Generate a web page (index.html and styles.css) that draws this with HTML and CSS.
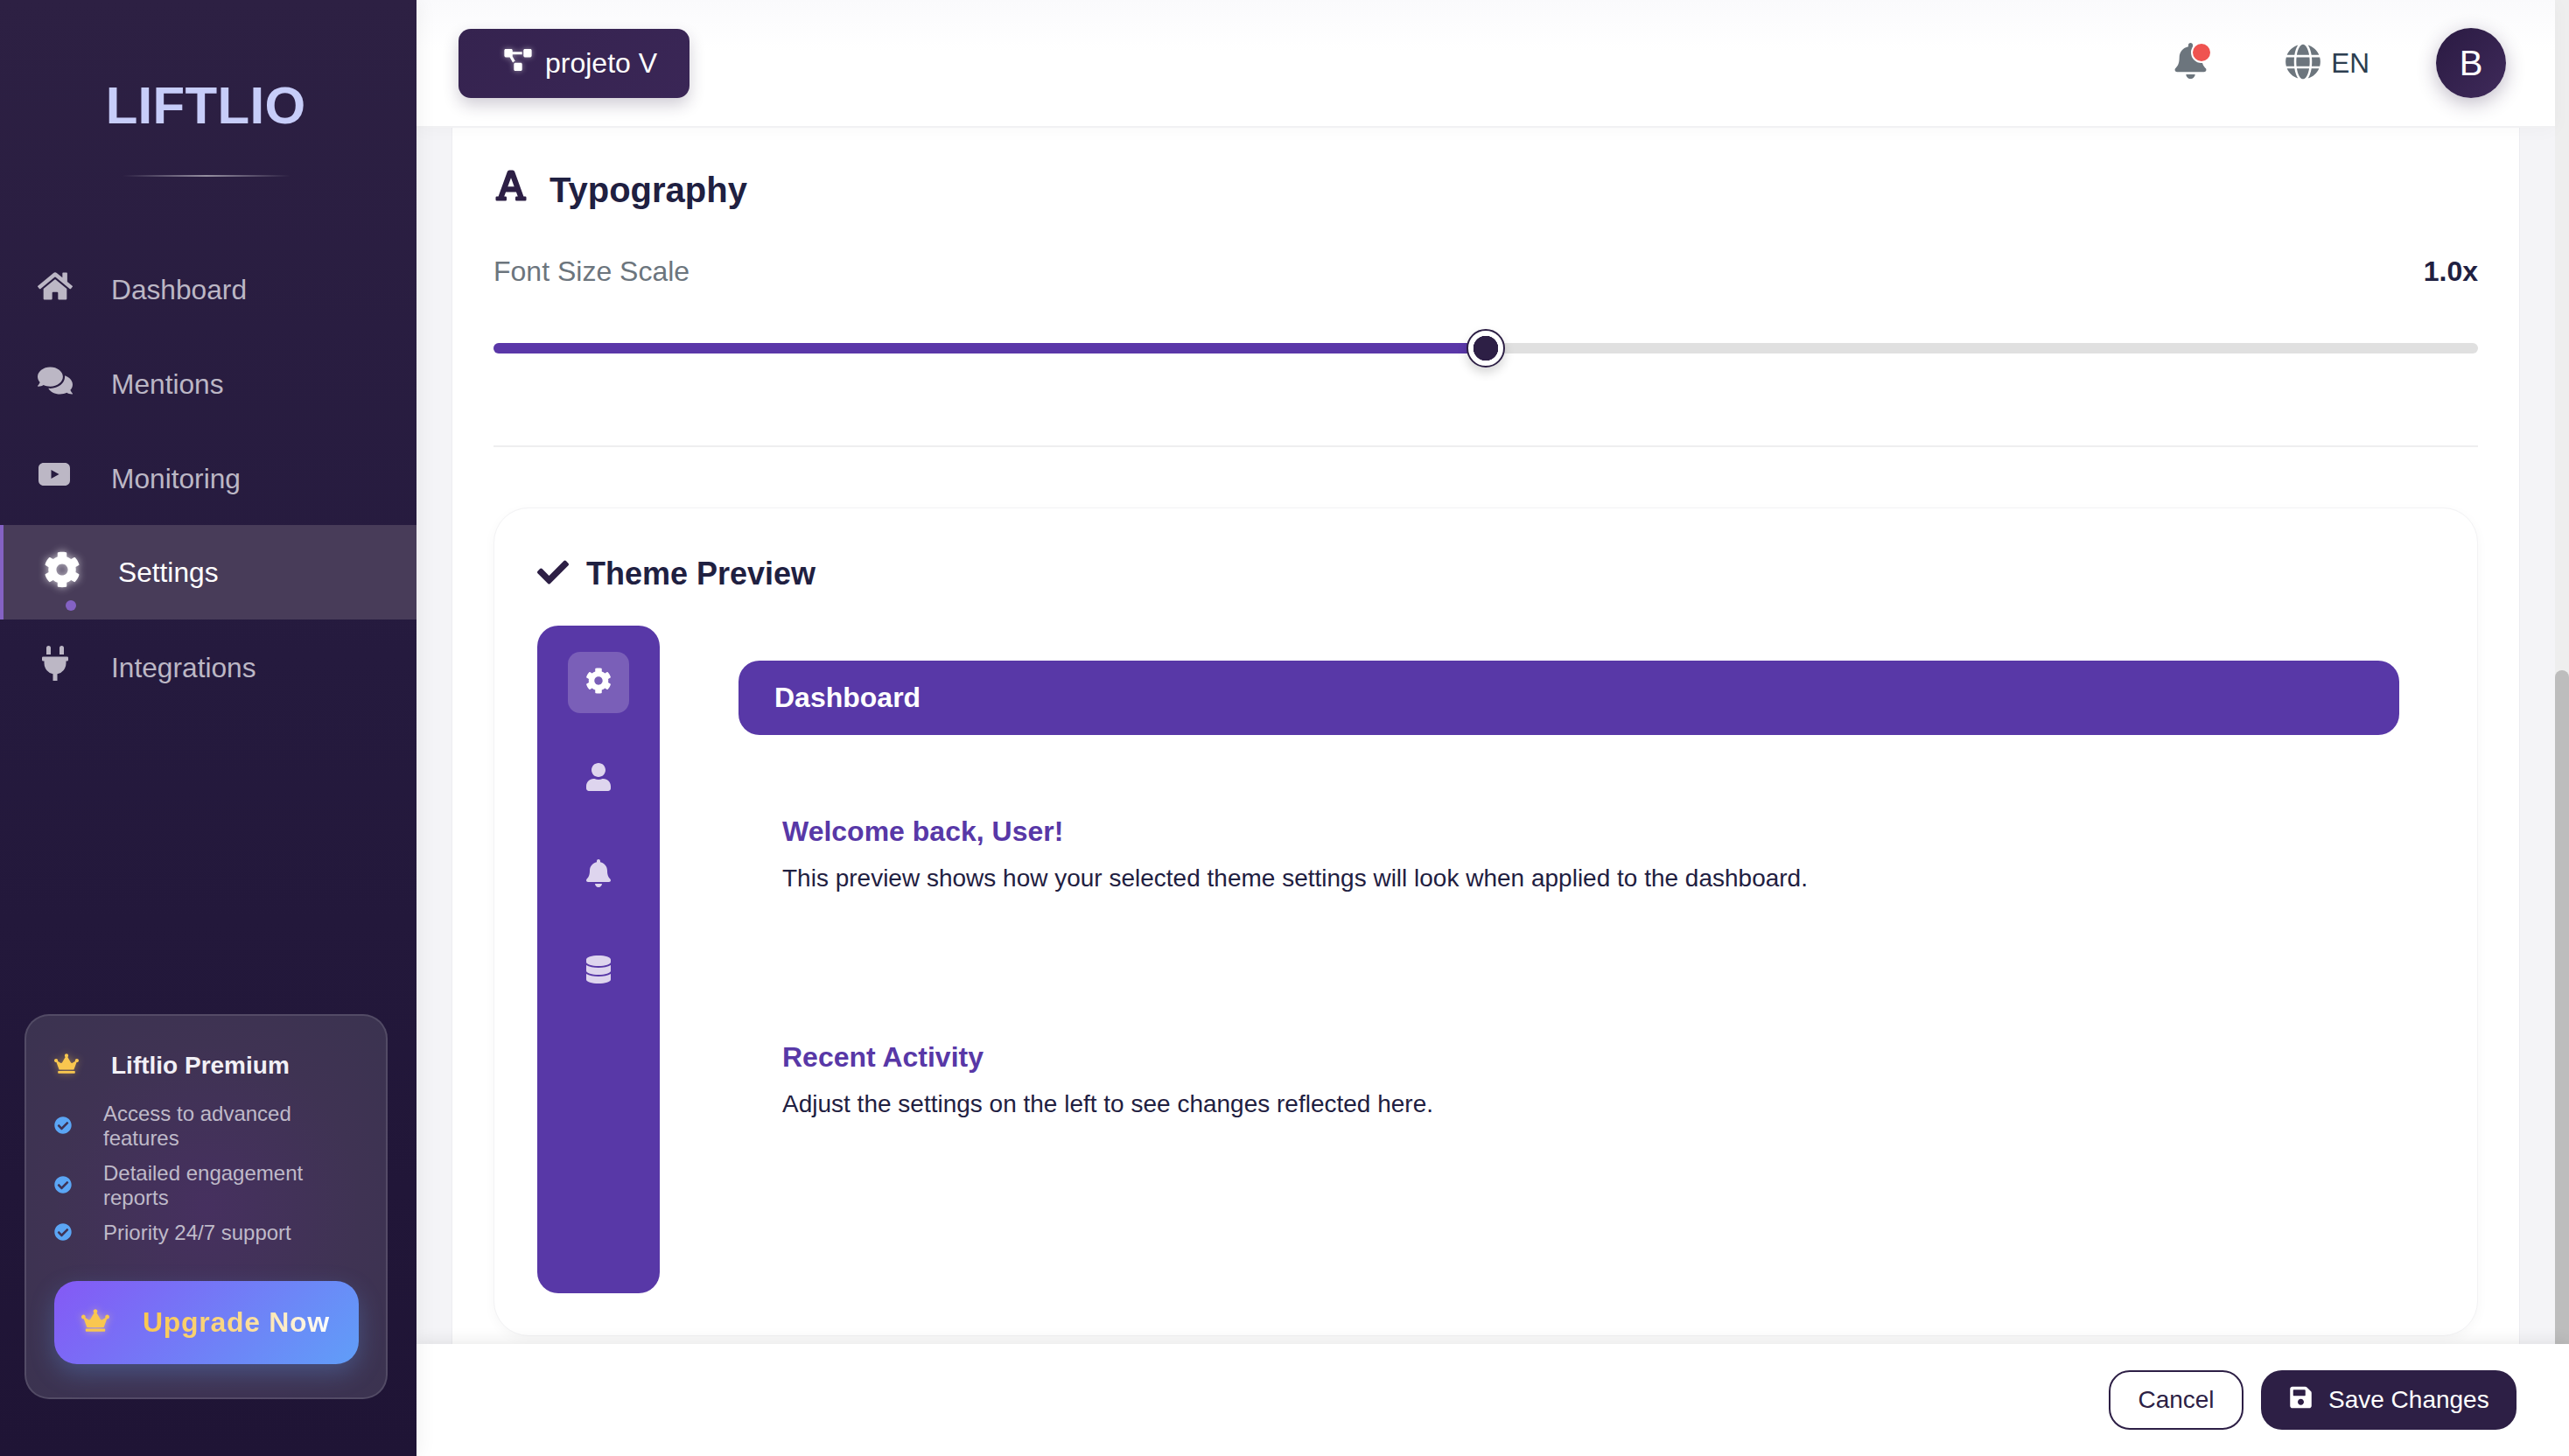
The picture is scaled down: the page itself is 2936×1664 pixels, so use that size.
FILE: index.html
```html
<!DOCTYPE html>
<html lang="en">
<head>
    <meta charset="UTF-8">
    <title>Liftlio - Settings</title>
    <link rel="stylesheet" href="styles.css">
</head>
<body>
    <svg class="icon-defs" xmlns="http://www.w3.org/2000/svg">
        <symbol id="i-home" viewBox="0 0 576 512"><path d="M280.37 148.26L96 300.11V464a16 16 0 0 0 16 16l112.06-.29a16 16 0 0 0 15.92-16V368a16 16 0 0 1 16-16h64a16 16 0 0 1 16 16v95.64a16 16 0 0 0 16 16.05L464 480a16 16 0 0 0 16-16V300L295.67 148.26a12.19 12.19 0 0 0-15.3 0zM571.6 251.47L488 182.56V44.05a12 12 0 0 0-12-12h-56a12 12 0 0 0-12 12v72.61L318.47 43a48 48 0 0 0-61 0L4.34 251.47a12 12 0 0 0-1.6 16.9l25.5 31A12 12 0 0 0 45.15 301l235.22-193.74a12.19 12.19 0 0 1 15.3 0L530.9 301a12 12 0 0 0 16.9-1.6l25.5-31a12 12 0 0 0-1.7-16.93z"/></symbol>
        <symbol id="i-comments" viewBox="0 0 576 512"><path d="M416 192c0-88.4-93.1-160-208-160S0 103.6 0 192c0 34.3 14.1 65.9 38 92-13.4 30.2-35.5 54.2-35.8 54.5-2.2 2.3-2.8 5.7-1.5 8.7S4.8 352 8 352c36.6 0 66.9-12.3 88.7-25 32.2 15.7 70.3 25 111.3 25 114.9 0 208-71.6 208-160zm122 220c23.9-26 38-57.7 38-92 0-66.9-53.5-124.2-129.3-148.1.9 6.6 1.3 13.3 1.3 20.1 0 105.9-107.7 192-240 192-10.8 0-21.3-.8-31.7-1.9C207.8 439.6 281.8 480 368 480c41 0 79.1-9.2 111.3-25 21.8 12.7 52.1 25 88.7 25 3.2 0 6.1-1.9 7.3-4.8 1.3-2.9.7-6.3-1.5-8.7-.3-.3-22.4-24.2-35.8-54.5z"/></symbol>
        <symbol id="i-youtube" viewBox="0 0 36 26"><path fill-rule="evenodd" d="M6 0h24c3.6 0 6 2.4 6 6v14c0 3.6-2.4 6-6 6H6c-3.600 0-6-2.400-6-6V6c0-3.600 2.400-6 6-6zM14.500 8v10l9-5z"/></symbol>
        <symbol id="i-cog" viewBox="0 0 512 512"><path d="M487.4 315.7l-42.6-24.6c4.3-23.2 4.3-47 0-70.2l42.6-24.6c4.9-2.8 7.1-8.6 5.500-14-11.100-35.600-30-67.800-54.700-94.600-3.800-4.100-10-5.100-14.800-2.300L380.800 110c-17.900-15.400-38.500-27.300-60.800-35.100V25.800c0-5.600-3.900-10.500-9.400-11.700-36.700-8.200-74.300-7.800-109.200 0-5.500 1.200-9.400 6.100-9.400 11.700V75c-22.200 7.900-42.800 19.800-60.800 35.100L88.700 85.500c-4.900-2.800-11-1.900-14.800 2.300-24.700 26.700-43.600 58.900-54.700 94.600-1.700 5.400.6 11.200 5.500 14L67.300 221c-4.300 23.200-4.300 47 0 70.200l-42.600 24.600c-4.900 2.800-7.100 8.600-5.500 14 11.100 35.600 30 67.800 54.700 94.600 3.800 4.100 10 5.100 14.800 2.300l42.600-24.600c17.900 15.400 38.500 27.300 60.800 35.100v49.200c0 5.600 3.900 10.500 9.400 11.700 36.700 8.200 74.300 7.800 109.200 0 5.500-1.200 9.400-6.100 9.400-11.700v-49.200c22.200-7.900 42.800-19.800 60.800-35.100l42.600 24.600c4.900 2.800 11 1.900 14.800-2.300 24.700-26.700 43.600-58.900 54.700-94.600 1.500-5.500-.7-11.300-5.600-14.100zM256 336c-44.100 0-80-35.900-80-80s35.900-80 80-80 80 35.900 80 80-35.900 80-80 80z"/></symbol>
        <symbol id="i-plug" viewBox="0 0 384 512"><path d="M320,32a32,32,0,0,0-64,0v96h64Zm48,128H16A16,16,0,0,0,0,176v32a16,16,0,0,0,16,16H32v32A160.07,160.07,0,0,0,160,412.8V512h64V412.8A160.07,160.07,0,0,0,352,256V224h16a16,16,0,0,0,16-16V176A16,16,0,0,0,368,160ZM128,32a32,32,0,0,0-64,0v96h64Z"/></symbol>
        <symbol id="i-crown" viewBox="0 0 640 512"><path d="M528 448H112c-8.800 0-16 7.200-16 16v32c0 8.800 7.200 16 16 16h416c8.800 0 16-7.200 16-16v-32c0-8.800-7.200-16-16-16zm64-320c-26.500 0-48 21.500-48 48 0 7.100 1.600 13.700 4.400 19.800L476 239.200c-15.400 9.200-35.300 4-44.200-11.600L350.300 85C361 76.200 368 63 368 48c0-26.500-21.500-48-48-48s-48 21.500-48 48c0 15 7 28.200 17.700 37l-81.500 142.600c-8.900 15.600-28.900 20.800-44.200 11.600l-72.300-43.400c2.700-6 4.400-12.700 4.400-19.800 0-26.500-21.500-48-48-48S0 149.500 0 176s21.500 48 48 48c2.600 0 5.200-.4 7.700-.8L128 416h384l72.300-192.800c2.500.4 5.100.8 7.700.8 26.500 0 48-21.500 48-48s-21.500-48-48-48z"/></symbol>
        <symbol id="i-check-circle" viewBox="0 0 512 512"><path d="M504 256c0 136.967-111.033 248-248 248S8 392.967 8 256 119.033 8 256 8s248 111.033 248 248zM227.314 387.314l184-184c6.248-6.248 6.248-16.379 0-22.627l-22.627-22.627c-6.248-6.249-16.379-6.249-22.628 0L216 308.118l-70.059-70.059c-6.248-6.248-16.379-6.248-22.628 0l-22.627 22.627c-6.248 6.248-6.248 16.379 0 22.627l104 104c6.249 6.249 16.379 6.249 22.628.001z"/></symbol>
        <symbol id="i-check" viewBox="0 0 512 512"><path d="M173.898 439.404l-166.400-166.400c-9.997-9.997-9.997-26.206 0-36.204l36.203-36.204c9.997-9.998 26.207-9.998 36.204 0L192 312.690 432.095 72.596c9.997-9.997 26.207-9.997 36.204 0l36.203 36.204c9.997 9.997 9.997 26.206 0 36.204l-294.400 294.401c-9.998 9.997-26.207 9.997-36.204-.001z"/></symbol>
        <symbol id="i-bell" viewBox="0 0 448 512"><path d="M224 512c35.320 0 63.970-28.650 63.970-64H160.030c0 35.350 28.650 64 63.970 64zm215.390-149.710c-19.320-20.760-55.470-51.990-55.470-154.290 0-77.700-54.480-139.900-127.940-155.160V32c0-17.670-14.320-32-31.980-32s-31.980 14.330-31.980 32v20.840C118.560 68.100 64.080 130.300 64.080 208c0 102.300-36.150 133.530-55.470 154.290-6 6.450-8.660 14.160-8.610 21.710.11 16.400 12.980 32 32.100 32h383.800c19.120 0 32-15.600 32.100-32 .05-7.550-2.610-15.270-8.610-21.710z"/></symbol>
        <symbol id="i-user" viewBox="0 0 448 512"><path d="M224 256c70.700 0 128-57.300 128-128S294.700 0 224 0 96 57.300 96 128s57.300 128 128 128zm89.600 32h-16.700c-22.200 10.200-46.900 16-72.900 16s-50.600-5.800-72.900-16h-16.700C60.200 288 0 348.200 0 422.400V464c0 26.500 21.500 48 48 48h352c26.500 0 48-21.500 48-48v-41.600c0-74.200-60.200-134.400-134.400-134.400z"/></symbol>
        <symbol id="i-database" viewBox="0 0 448 512"><path d="M448 73.143v45.714C448 159.143 347.667 192 224 192S0 159.143 0 118.857V73.143C0 32.857 100.333 0 224 0s224 32.857 224 73.143zM448 176v102.857C448 319.143 347.667 352 224 352S0 319.143 0 278.857V176c48.125 33.143 136.208 48.572 224 48.572S399.874 209.143 448 176zm0 160v102.857C448 479.143 347.667 512 224 512S0 479.143 0 438.857V336c48.125 33.143 136.208 48.572 224 48.572S399.874 369.143 448 336z"/></symbol>
        <symbol id="i-font" viewBox="0 0 448 512"><path d="M432 416h-23.410L277.880 53.690A32 32 0 0 0 247.580 32h-47.160a32 32 0 0 0-30.300 21.690L39.410 416H16a16 16 0 0 0-16 16v32a16 16 0 0 0 16 16h128a16 16 0 0 0 16-16v-32a16 16 0 0 0-16-16h-19.600l23.300-64h152.600l23.300 64H304a16 16 0 0 0-16 16v32a16 16 0 0 0 16 16h128a16 16 0 0 0 16-16v-32a16 16 0 0 0-16-16zM176.850 272L224 142.510 271.150 272z"/></symbol>
        <symbol id="i-project" viewBox="0 0 640 512"><path d="M384 320H256c-17.670 0-32 14.330-32 32v128c0 17.670 14.330 32 32 32h128c17.670 0 32-14.330 32-32V352c0-17.670-14.330-32-32-32zM192 32c0-17.670-14.330-32-32-32H32C14.330 0 0 14.330 0 32v128c0 17.670 14.330 32 32 32h95.720l73.160 128.040C211.980 300.980 232.400 288 256 288h.28L192 175.510V128h224V64H192V32zM608 0H480c-17.670 0-32 14.330-32 32v128c0 17.670 14.330 32 32 32h128c17.670 0 32-14.330 32-32V32c0-17.670-14.330-32-32-32z"/></symbol>
        <symbol id="i-globe" viewBox="0 0 496 512"><path d="M336.500 160C322 70.700 287.800 8 248 8s-74 62.700-88.500 152h177zM152 256c0 22.200 1.200 43.500 3.300 64h185.300c2.100-20.500 3.300-41.800 3.300-64s-1.200-43.500-3.300-64H155.300c-2.100 20.500-3.300 41.800-3.300 64zm324.700-96c-28.600-67.900-86.500-120.400-158-141.600 24.400 33.800 41.200 84.700 50 141.600h108zM177.200 18.400C105.800 39.600 47.800 92.100 19.300 160h108c8.700-56.900 25.500-107.800 49.900-141.600zM487.400 192H372.700c2.100 21 3.300 42.500 3.300 64s-1.200 43-3.300 64h114.600c5.500-20.500 8.600-41.800 8.600-64s-3.100-43.500-8.500-64zM120 256c0-21.500 1.200-43 3.300-64H8.600C3.200 212.500 0 233.800 0 256s3.200 43.500 8.600 64h114.600c-2-21-3.200-42.500-3.200-64zm39.500 96c14.500 89.300 48.700 152 88.500 152s74-62.700 88.500-152h-177zm159.300 141.600c71.400-21.200 129.400-73.700 158-141.600h-108c-8.800 56.900-25.600 107.800-50 141.600zM19.300 352c28.600 67.900 86.500 120.400 158 141.600-24.400-33.800-41.200-84.700-50-141.600h-108z"/></symbol>
        <symbol id="i-save" viewBox="0 0 448 512"><path d="M433.941 129.941l-83.882-83.882A48 48 0 0 0 316.118 32H48C21.490 32 0 53.490 0 80v352c0 26.510 21.490 48 48 48h352c26.510 0 48-21.490 48-48V163.882a48 48 0 0 0-14.059-33.941zM224 416c-35.346 0-64-28.654-64-64 0-35.346 28.654-64 64-64s64 28.654 64 64c0 35.346-28.654 64-64 64zm96-304.520V212c0 6.627-5.373 12-12 12H76c-6.627 0-12-5.373-12-12V108c0-6.627 5.373-12 12-12h228.520c3.183 0 6.235 1.264 8.485 3.515l3.480 3.480A11.996 11.996 0 0 1 320 111.480z"/></symbol>
    </svg>

    <div class="app">
        <aside class="sidebar">
            <div class="logo">LIFTLIO</div>
            <div class="logo-line"></div>

            <nav class="nav">
                <a class="nav-item"><svg class="nav-icon icon-home"><use href="#i-home"/></svg><span>Dashboard</span></a>
                <a class="nav-item"><svg class="nav-icon icon-comments"><use href="#i-comments"/></svg><span>Mentions</span></a>
                <a class="nav-item"><svg class="nav-icon icon-youtube"><use href="#i-youtube"/></svg><span>Monitoring</span></a>
                <a class="nav-item active"><svg class="nav-icon icon-cog"><use href="#i-cog"/></svg><span>Settings</span></a>
                <a class="nav-item"><svg class="nav-icon icon-plug"><use href="#i-plug"/></svg><span>Integrations</span></a>
            </nav>

            <div class="premium">
                <div class="premium-title">
                    <svg class="premium-crown"><use href="#i-crown"/></svg>
                    <span>Liftlio Premium</span>
                </div>
                <ul class="premium-list">
                    <li><svg class="premium-check"><use href="#i-check-circle"/></svg><span>Access to advanced features</span></li>
                    <li><svg class="premium-check"><use href="#i-check-circle"/></svg><span>Detailed engagement reports</span></li>
                    <li><svg class="premium-check"><use href="#i-check-circle"/></svg><span>Priority 24/7 support</span></li>
                </ul>
                <button class="upgrade-btn">
                    <svg class="upgrade-crown"><use href="#i-crown"/></svg>
                    <span class="upgrade-text">Upgrade Now</span>
                </button>
            </div>
        </aside>

        <div class="main">
            <div class="upper">
                <div class="page">
                    <header class="topbar">
                        <button class="project-btn">
                            <svg class="project-icon"><use href="#i-project"/></svg>
                            <span>projeto V</span>
                        </button>
                        <div class="topbar-right">
                            <div class="bell">
                                <svg class="bell-icon"><use href="#i-bell"/></svg>
                                <span class="bell-dot"></span>
                            </div>
                            <div class="lang">
                                <svg class="globe-icon"><use href="#i-globe"/></svg>
                                <span>EN</span>
                            </div>
                            <div class="avatar">B</div>
                        </div>
                    </header>

                    <main class="content">
                        <div class="card">
                            <h2 class="section-title">
                                <svg class="font-icon"><use href="#i-font"/></svg>
                                <span>Typography</span>
                            </h2>
                            <div class="scale-row">
                                <span class="scale-label">Font Size Scale</span>
                                <span class="scale-value">1.0x</span>
                            </div>
                            <div class="slider">
                                <div class="slider-fill"></div>
                                <div class="slider-thumb"></div>
                            </div>
                            <hr class="divider">

                            <section class="preview-card">
                                <h3 class="preview-title">
                                    <svg class="check-icon"><use href="#i-check"/></svg>
                                    <span>Theme Preview</span>
                                </h3>
                                <div class="preview-body">
                                    <div class="preview-side">
                                        <div class="side-btn selected"><svg class="side-icon"><use href="#i-cog"/></svg></div>
                                        <div class="side-btn"><svg class="side-icon"><use href="#i-user"/></svg></div>
                                        <div class="side-btn"><svg class="side-icon"><use href="#i-bell"/></svg></div>
                                        <div class="side-btn"><svg class="side-icon"><use href="#i-database"/></svg></div>
                                    </div>
                                    <div class="preview-main">
                                        <div class="preview-bar">Dashboard</div>
                                        <div class="preview-block">
                                            <h4>Welcome back, User!</h4>
                                            <p>This preview shows how your selected theme settings will look when applied to the dashboard.</p>
                                        </div>
                                        <div class="preview-block">
                                            <h4>Recent Activity</h4>
                                            <p>Adjust the settings on the left to see changes reflected here.</p>
                                        </div>
                                    </div>
                                </div>
                            </section>
                        </div>
                    </main>
                </div>
                <div class="scroll-track"><div class="scroll-thumb"></div></div>
            </div>

            <footer class="footer">
                <button class="btn-cancel">Cancel</button>
                <button class="btn-save"><svg class="save-icon"><use href="#i-save"/></svg><span>Save Changes</span></button>
            </footer>
        </div>
    </div>
</body>
</html>
```

FILE: styles.css
```css
* {
    box-sizing: border-box;
}
html, body {
    margin: 0;
    padding: 0;
    height: 100%;
}
body {
    font-family: "Liberation Sans", Arial, sans-serif;
    background-color: #ffffff;
    color: #1f2041;
    overflow: hidden;
}
button {
    font-family: inherit;
    border: none;
    cursor: pointer;
}
svg {
    fill: currentColor;
    flex: none;
}
.icon-defs {
    display: none;
}
.app {
    display: flex;
    width: 2936px;
    height: 1664px;
}

/* Sidebar */
.sidebar {
    width: 476px;
    flex: none;
    display: flex;
    flex-direction: column;
    background: linear-gradient(180deg, #2d2043 0%, #251a3e 45%, #1f1435 100%);
    color: #bcb7c5;
    box-shadow: 4px 0 20px rgba(0, 0, 0, 0.05);
    position: relative;
    z-index: 3;
}
.logo {
    margin-top: 87px;
    text-align: center;
    font-size: 60px;
    line-height: 68px;
    font-weight: 700;
    letter-spacing: 0.3px;
    color: #c7cdf9;
    padding-right: 6px;
}
.logo-line {
    width: 192px;
    height: 2px;
    margin: 45px 0 0 140px;
    background: linear-gradient(90deg, transparent, rgba(255, 255, 255, 0.5), transparent);
}
.nav {
    margin-top: 74px;
    display: flex;
    flex-direction: column;
}
.nav-item {
    height: 108px;
    display: flex;
    align-items: center;
    gap: 44px;
    padding-left: 43px;
    font-size: 31.7px;
    position: relative;
}
.nav-item span {
    margin-top: 3px;
}
.nav-icon {
    margin-top: -6px;
}
.icon-home { width: 40px; height: 36px; }
.icon-comments { width: 40px; height: 36px; }
.icon-youtube { width: 38px; height: 26px; margin-top: -8px; margin-right: 2px; }
.icon-plug { width: 30px; height: 40px; margin-left: 5px; margin-right: 5px; margin-top: -8px; }
.nav-item.active {
    background-color: #483c59;
    border-left: 4px solid #8462c4;
    padding-left: 46px;
    color: #ffffff;
    gap: 43px;
}
.nav-item.active span {
    margin-top: 0;
}
.nav-item.active::after {
    content: "";
    position: absolute;
    left: 71px;
    top: 86px;
    width: 12px;
    height: 12px;
    border-radius: 50%;
    background-color: #8462c4;
}
.icon-cog {
    width: 42px;
    height: 42px;
    filter: drop-shadow(0 0 5px rgba(255, 255, 255, 0.7));
}

/* Premium box */
.premium {
    margin: auto 33px 65px 28px;
    height: 440px;
    padding: 39px 32px 0 32px;
    border: 2px solid rgba(255, 255, 255, 0.12);
    border-radius: 28px;
    background: radial-gradient(ellipse at 50% 50%, #46305f 0%, #3f3353 60%, #3b3350 100%);
}
.premium-title {
    display: flex;
    align-items: center;
    gap: 37px;
    font-size: 28px;
    font-weight: 700;
    color: #f2f0f6;
    height: 36px;
}
.premium-crown {
    width: 28px;
    height: 23px;
    margin-top: -5px;
    color: #f9c74f;
    filter: drop-shadow(0 0 4px rgba(249, 199, 79, 0.45));
}
.premium-list {
    list-style: none;
    margin: 23px 0 0;
    padding: 0;
    display: flex;
    flex-direction: column;
    gap: 12px;
    font-size: 24px;
    line-height: 28px;
    color: #bfbac9;
}
.premium-list li {
    display: flex;
    align-items: center;
    gap: 36px;
}
.premium-check {
    width: 20px;
    height: 20px;
    margin-top: -3px;
    color: #5ba6f5;
}
.upgrade-btn {
    width: 348px;
    height: 95px;
    margin-top: 41px;
    display: flex;
    align-items: center;
    gap: 38px;
    padding: 0 0 0 31px;
    border-radius: 26px;
    background: linear-gradient(135deg, #8459f5 0%, #609ef8 100%);
    box-shadow: 0 10px 28px rgba(96, 165, 250, 0.28);
}
.upgrade-crown {
    width: 32px;
    height: 26px;
    margin-top: -5px;
    color: #f9c74f;
    filter: drop-shadow(0 0 4px rgba(255, 220, 130, 0.6));
}
.upgrade-text {
    font-size: 32px;
    font-weight: 700;
    letter-spacing: 0.7px;
    background: linear-gradient(90deg, #f9c74f 0%, #fbd98a 50%, #ffffff 100%);
    -webkit-background-clip: text;
    background-clip: text;
    color: transparent;
}

/* Main area */
.main {
    flex: 1;
    min-width: 0;
    display: flex;
    flex-direction: column;
}
.upper {
    flex: 1;
    min-height: 0;
    display: flex;
}
.page {
    flex: 1;
    min-width: 0;
    display: flex;
    flex-direction: column;
    background-color: #f4f4f7;
}
.topbar {
    height: 146px;
    flex: none;
    display: flex;
    align-items: center;
    justify-content: space-between;
    padding: 0 56px 0 48px;
    background: linear-gradient(180deg, #fafafc 0%, #ffffff 40%);
    border-bottom: 2px solid #f1f1f3;
    box-shadow: 0 2px 20px rgba(0, 0, 0, 0.03);
    position: relative;
    z-index: 2;
}
.project-btn {
    width: 264px;
    height: 79px;
    display: flex;
    align-items: center;
    gap: 15px;
    padding-left: 52px;
    border-radius: 14px;
    background: linear-gradient(135deg, #35234f 0%, #3a2656 100%);
    color: #ffffff;
    font-size: 32px;
    box-shadow: 0 8px 18px rgba(45, 31, 69, 0.22);
}
.project-btn span {
    margin-top: 1px;
}
.project-icon {
    width: 32px;
    height: 25px;
    margin-top: -8px;
    filter: drop-shadow(0 0 3px rgba(255, 255, 255, 0.5));
}
.topbar-right {
    display: flex;
    align-items: center;
}
.bell {
    position: relative;
    width: 37px;
    height: 41px;
    margin-top: -6px;
    margin-right: 90px;
    color: #6c757d;
}
.bell-icon {
    width: 37px;
    height: 41px;
    display: block;
}
.bell-dot {
    position: absolute;
    top: -1px;
    right: -6px;
    width: 24px;
    height: 24px;
    border-radius: 50%;
    background-color: #ef5350;
    border: 2px solid #ffffff;
}
.lang {
    display: flex;
    align-items: center;
    gap: 12px;
    margin-right: 76px;
    font-size: 31.5px;
    color: #2c3e50;
}
.globe-icon {
    width: 40px;
    height: 41px;
    margin-top: -4px;
    color: #6c757d;
}
.avatar {
    width: 80px;
    height: 80px;
    border-radius: 50%;
    display: flex;
    align-items: center;
    justify-content: center;
    background: linear-gradient(135deg, #2a1a42 0%, #3f2a5a 100%);
    color: #ffffff;
    font-size: 40px;
    box-shadow: 0 6px 22px rgba(45, 31, 69, 0.3);
}

/* Settings card */
.content {
    flex: 1;
    min-height: 0;
    overflow: hidden;
    padding: 0 40px;
}
.card {
    background-color: #ffffff;
    border-left: 1px solid #ececf0;
    border-right: 1px solid #ececf0;
    padding: 48px 47px 0;
    height: 1600px;
}
.section-title {
    margin: 0;
    display: flex;
    align-items: flex-end;
    gap: 26px;
    font-size: 40px;
    line-height: 46px;
    height: 46px;
    font-weight: 700;
}
.font-icon {
    width: 36px;
    height: 40px;
    margin-bottom: 8px;
    margin-left: 2px;
    color: #2d1f45;
}
.scale-row {
    display: flex;
    justify-content: space-between;
    align-items: center;
    margin-top: 51px;
    height: 38px;
    font-size: 32px;
    color: #6c757d;
}
.scale-value {
    font-weight: 700;
    color: #1f2041;
}
.slider {
    position: relative;
    height: 12px;
    margin-top: 63px;
    border-radius: 6px;
    background-color: #e0e0e0;
}
.slider-fill {
    width: 50%;
    height: 100%;
    border-radius: 6px 0 0 6px;
    background-color: #5a37a8;
}
.slider-thumb {
    position: absolute;
    left: 1112px;
    top: -16px;
    width: 44px;
    height: 44px;
    border-radius: 50%;
    border: 2px solid #2d1f45;
    background: radial-gradient(circle, #2d1f45 0 14px, #ffffff 14.5px);
    box-shadow: 0 6px 12px rgba(0, 0, 0, 0.16);
}
.divider {
    border: none;
    border-top: 2px solid #eeeeef;
    margin: 105px 0 0;
}
.preview-card {
    margin-top: 69px;
    height: 947px;
    padding: 50px 48px 0 49px;
    border: 1px solid #f2f2f4;
    border-radius: 40px;
    background-color: #ffffff;
    box-shadow: 0 4px 14px rgba(0, 0, 0, 0.035);
}
.preview-title {
    margin: 0;
    display: flex;
    align-items: center;
    gap: 20px;
    height: 50px;
    font-size: 36px;
    font-weight: 700;
}
.check-icon {
    width: 36px;
    height: 36px;
    margin-top: -5px;
    color: #2d1f45;
}
.preview-body {
    display: flex;
    margin-top: 34px;
}
.preview-side {
    width: 140px;
    height: 763px;
    flex: none;
    display: flex;
    flex-direction: column;
    align-items: center;
    gap: 40px;
    padding-top: 30px;
    border-radius: 24px;
    background-color: #5838a7;
    color: #ded5ee;
}
.side-btn {
    width: 70px;
    height: 70px;
    border-radius: 14px;
    display: flex;
    align-items: center;
    justify-content: center;
}
.side-btn.selected {
    background-color: #7a5fb8;
    color: #ffffff;
}
.side-icon {
    width: 30px;
    height: 32px;
    margin-top: -4px;
}
.preview-main {
    flex: 1;
    min-width: 0;
    padding: 40px 41px 0 90px;
}
.preview-bar {
    height: 85px;
    display: flex;
    align-items: center;
    padding-left: 41px;
    border-radius: 24px;
    background-color: #5838a7;
    color: #ffffff;
    font-size: 32px;
    font-weight: 700;
}
.preview-block {
    padding-left: 50px;
    height: 258px;
}
.preview-bar + .preview-block {
    margin-top: 91px;
}
.preview-block h4 {
    margin: 0;
    height: 38px;
    line-height: 38px;
    font-size: 32px;
    font-weight: 700;
    color: #5838a7;
}
.preview-block p {
    margin: 17px 0 0;
    font-size: 28px;
    line-height: 36px;
    color: #1f2041;
}

/* Scrollbar */
.scroll-track {
    width: 16px;
    flex: none;
    background-color: #eeeeee;
    padding-top: 766px;
}
.scroll-thumb {
    height: 100%;
    border-radius: 8px 8px 0 0;
    background-color: #bdbdbd;
}

/* Footer */
.footer {
    height: 128px;
    flex: none;
    display: flex;
    justify-content: flex-end;
    align-items: flex-start;
    gap: 20px;
    padding: 30px 60px 0 0;
    background-color: #ffffff;
    box-shadow: 0 -4px 16px rgba(0, 0, 0, 0.08);
    position: relative;
    z-index: 2;
}
.btn-cancel {
    width: 154px;
    height: 68px;
    border: 2px solid #2d1f45;
    border-radius: 24px;
    background-color: #ffffff;
    color: #2d1f45;
    font-size: 28px;
}
.btn-save {
    width: 292px;
    height: 68px;
    display: flex;
    align-items: center;
    gap: 19px;
    padding-left: 33px;
    border-radius: 24px;
    background-color: #2d1f45;
    color: #ffffff;
    font-size: 28px;
}
.save-icon {
    width: 25px;
    height: 28px;
    margin-top: -6px;
}
```
